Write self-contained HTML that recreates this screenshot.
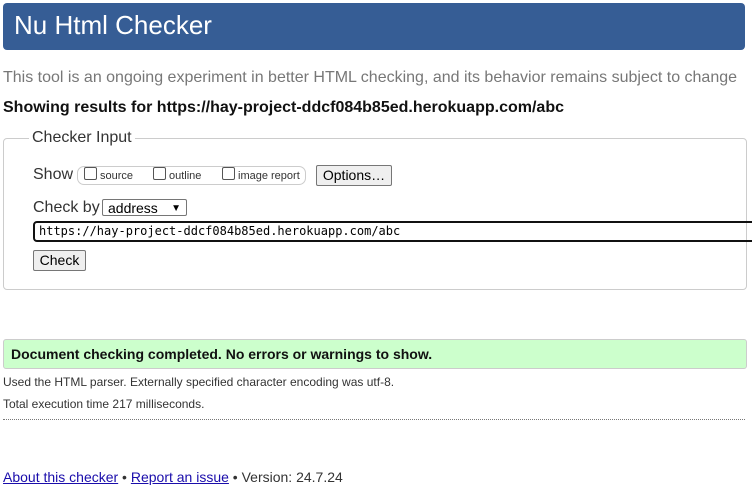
<!DOCTYPE html>
<html><head><style>
body{margin:0;width:752px;height:491px;background:#fff;font-family:"Liberation Sans",Arial,sans-serif;position:relative;overflow:hidden;color:#222}
.a{position:absolute;white-space:nowrap}
.hdr{left:3px;top:3px;width:742px;height:47px;background:#365d95;border-radius:4px}
.cb{display:inline-block;width:11px;height:11px;border:1px solid #555;border-radius:2px;background:#fff;vertical-align:-1px;margin-right:3px}
.btn{background:#efefef;border:1px solid #767676;border-radius:2px;font-size:14px;color:#000}
a{color:#1a0dab}
</style></head><body>
<div class="a hdr"></div>
<div class="a" style="left:14px;top:10px;font-size:26px;color:#fff">Nu Html Checker</div>
<div class="a" style="left:3px;top:69px;font-size:16px;color:#777">This tool is an ongoing experiment in better HTML checking, and its behavior remains subject to change</div>
<div class="a" style="left:3px;top:99px;font-size:16px;font-weight:bold;color:#111">Showing results for https://hay-project-ddcf084b85ed.herokuapp.com/abc</div>
<div class="a" style="left:3px;top:138px;width:742px;height:150px;border:1px solid #ccc;border-radius:4px"></div>
<div class="a" style="left:29px;top:129px;font-size:16px;background:#fff;padding:0 3px;color:#333">Checker Input</div>
<div class="a" style="left:33px;top:166px;font-size:16px;color:#333">Show</div>
<div class="a" style="left:77px;top:166px;width:227px;height:17px;border:1px solid #ccc;border-radius:7px"></div>
<div class="a" style="left:84px;top:167px;font-size:11px;color:#333"><span class="cb"></span>source</div>
<div class="a" style="left:153px;top:167px;font-size:11px;color:#333"><span class="cb"></span>outline</div>
<div class="a" style="left:222px;top:167px;font-size:11px;color:#333"><span class="cb"></span>image report</div>
<div class="a btn" style="left:316px;top:165px;width:74px;height:19px;line-height:19px;text-align:center">Options…</div>
<div class="a" style="left:33px;top:199px;font-size:16px;color:#333">Check by</div>
<div class="a" style="left:102px;top:199px;height:17px;border:1px solid #767676;border-radius:2px;font-size:14px;line-height:17px;padding-left:5px;box-sizing:border-box;width:85px;color:#000">address<span style="position:absolute;right:5px;top:0;font-size:10px">&#9660;</span></div>
<div class="a" style="left:33px;top:221px;width:730px;height:21px;border:2px solid #111;border-radius:4px;box-sizing:border-box;font-family:'DejaVu Sans Mono','Liberation Mono',monospace;font-size:12px;line-height:17px;padding-left:4px;color:#000">https://hay-project-ddcf084b85ed.herokuapp.com/abc</div>
<div class="a btn" style="left:33px;top:250px;width:51px;height:19px;line-height:19px;text-align:center">Check</div>
<div class="a" style="left:3px;top:339px;width:742px;height:28px;background:#ccffcc;border:1px solid #ccc;border-radius:3px"></div>
<div class="a" style="left:11px;top:346px;font-size:14px;font-weight:bold;color:#111">Document checking completed. No errors or warnings to show.</div>
<div class="a" style="left:3px;top:375px;font-size:12px;color:#333">Used the HTML parser. Externally specified character encoding was utf-8.</div>
<div class="a" style="left:3px;top:397px;font-size:12px;color:#333">Total execution time 217 milliseconds.</div>
<div class="a" style="left:3px;top:419px;width:742px;border-top:1px dotted #777"></div>
<div class="a" style="left:3px;top:469px;font-size:14px;color:#333"><a href="#">About this checker</a> • <a href="#">Report an issue</a> • Version: 24.7.24</div>
</body></html>
